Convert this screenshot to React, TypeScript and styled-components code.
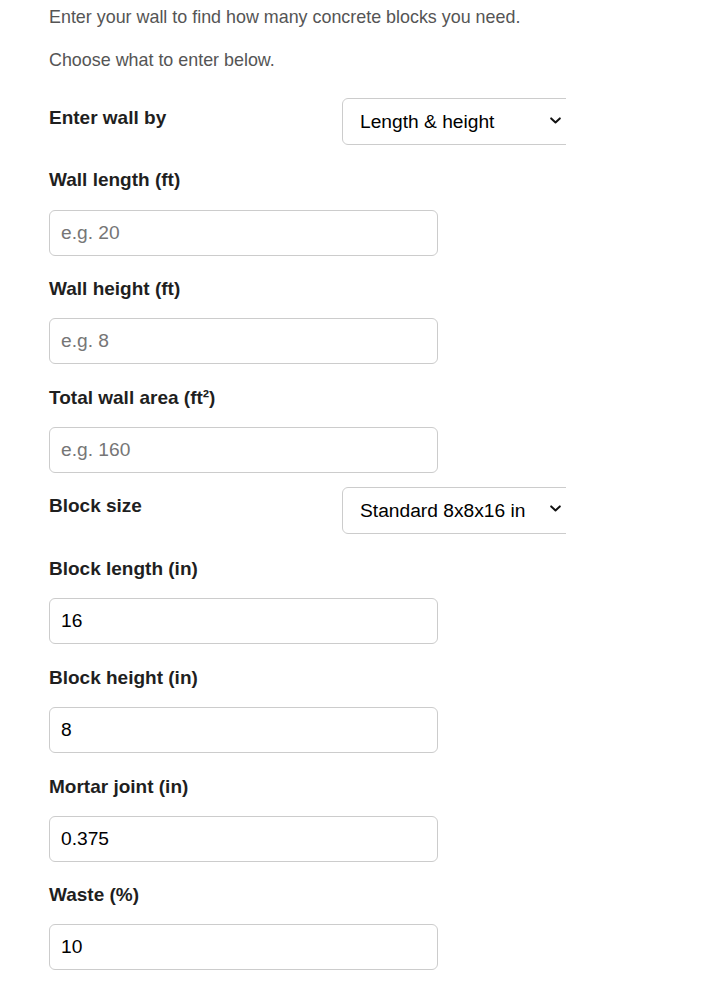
import React from "react";
import styled, { createGlobalStyle } from "styled-components";

const GlobalStyle = createGlobalStyle`
  html, body {
    margin: 0;
    padding: 0;
    background: #ffffff;
  }
  body {
    font-family: "Liberation Sans", Arial, sans-serif;
  }
  * { box-sizing: border-box; }
`;

const Page = styled.main`
  width: 711px;
  padding: 4.6px 0 0 49px;
`;

const Intro = styled.p`
  margin: 0 0 17.8px;
  font-size: 17.9px;
  line-height: 25.2px;
  color: #555555;
`;

const Form = styled.form`
  display: flex;
  flex-direction: column;
  margin-top: 25.4px;
  width: 517px;
`;

const Field = styled.div`
  display: flex;
  flex-direction: column;
  align-items: flex-start;
  margin-bottom: 13.9px;
`;

const Row = styled.div`
  display: flex;
  align-items: flex-start;
  margin-bottom: 13.9px;
`;

const Label = styled.label<{ $inline?: boolean }>`
  display: block;
  margin: 8.5px 0 18.3px;
  font-size: 19px;
  line-height: 22px;
  font-weight: 700;
  color: #1f1f1f;
  ${(p) => (p.$inline ? "flex: 0 0 293px;" : "")}
`;

const Input = styled.input`
  width: 389px;
  height: 46px;
  padding: 0 11px;
  border: 1px solid #cccccc;
  border-radius: 6px;
  background: #ffffff;
  font-family: "Liberation Sans", Arial, sans-serif;
  font-size: 19.2px;
  color: #000000;
  outline: none;
  &::placeholder {
    color: #767676;
  }
`;

const SelectWrap = styled.div`
  position: relative;
  width: 224px;
  height: 47px;
  overflow: hidden;
`;

const Select = styled.select`
  appearance: none;
  -webkit-appearance: none;
  width: 240px;
  height: 47px;
  padding: 0 40px 0 17px;
  border: 1px solid #cccccc;
  border-radius: 6px;
  background: #ffffff;
  font-family: "Liberation Sans", Arial, sans-serif;
  font-size: 19.2px;
  color: #000000;
  outline: none;
`;

const Chevron = styled.svg`
  position: absolute;
  right: 5px;
  top: 18.5px;
  width: 11px;
  height: 7px;
  pointer-events: none;
`;

const ArrowIcon = () => (
  <Chevron viewBox="0 0 11 7" fill="none">
    <path d="M1.2 1.4 L5.5 5.4 L9.8 1.4" stroke="#111" strokeWidth="2" strokeLinecap="round" strokeLinejoin="round" />
  </Chevron>
);

type FieldDef = { id: string; label: React.ReactNode; placeholder?: string; value?: string };

const wallFields: FieldDef[] = [
  { id: "len", label: "Wall length (ft)", placeholder: "e.g. 20" },
  { id: "hgt", label: "Wall height (ft)", placeholder: "e.g. 8" },
  { id: "area", label: <>Total wall area (ft²)</>, placeholder: "e.g. 160" },
];

const blockFields: FieldDef[] = [
  { id: "blen", label: "Block length (in)", value: "16" },
  { id: "bhgt", label: "Block height (in)", value: "8" },
  { id: "mortar", label: "Mortar joint (in)", value: "0.375" },
  { id: "waste", label: "Waste (%)", value: "10" },
];

const TextField = ({ f }: { f: FieldDef }) => (
  <Field>
    <Label htmlFor={f.id}>{f.label}</Label>
    <Input id={f.id} type="text" placeholder={f.placeholder} defaultValue={f.value} />
  </Field>
);

export default function App() {
  return (
    <>
      <GlobalStyle />
      <Page>
        <Intro>Enter your wall to find how many concrete blocks you need.</Intro>
        <Intro>Choose what to enter below.</Intro>
        <Form onSubmit={(e) => e.preventDefault()}>
          <Row>
            <Label $inline htmlFor="mode">Enter wall by</Label>
            <SelectWrap>
              <Select id="mode" defaultValue="lh">
                <option value="lh">Length &amp; height</option>
                <option value="area">Total area</option>
              </Select>
              <ArrowIcon />
            </SelectWrap>
          </Row>
          {wallFields.map((f) => (
            <TextField key={f.id} f={f} />
          ))}
          <Row>
            <Label $inline htmlFor="size">Block size</Label>
            <SelectWrap>
              <Select id="size" defaultValue="std">
                <option value="std">Standard 8x8x16 in</option>
                <option value="custom">Custom</option>
              </Select>
              <ArrowIcon />
            </SelectWrap>
          </Row>
          {blockFields.map((f) => (
            <TextField key={f.id} f={f} />
          ))}
        </Form>
      </Page>
    </>
  );
}
